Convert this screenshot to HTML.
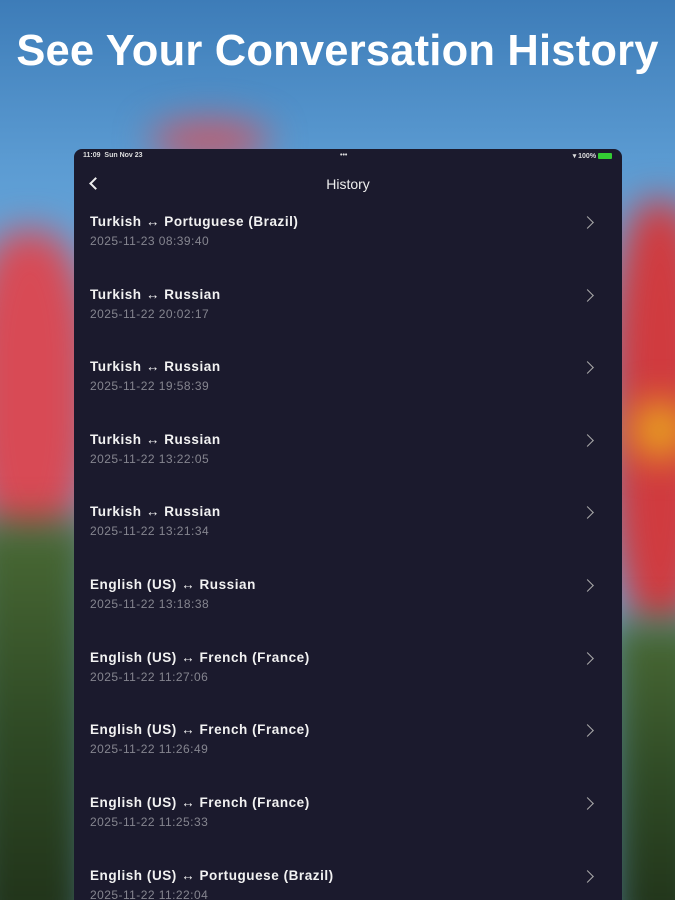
<!DOCTYPE html>
<html><head><meta charset="utf-8"><style>
*{margin:0;padding:0;box-sizing:border-box}
html{width:675px;height:900px;overflow:hidden;background:#5b9bd2}
body{width:675px;height:900px;overflow:hidden;position:relative;font-family:"Liberation Sans",sans-serif;background:linear-gradient(180deg,#3d7cb8 0%,#5b9bd2 18%,#6aa8dc 30%,#6aa8dc 100%)}
.bg{position:absolute;filter:blur(18px)}
h1{position:absolute;top:27px;left:0;width:675px;text-align:center;color:#fff;font-size:43.5px;font-weight:bold;letter-spacing:0.2px}
.panel{position:absolute;left:74px;top:149px;width:548px;height:760px;background:#1b1a2d;border-radius:8px 8px 0 0}
.sb{position:absolute;top:3px;font-size:7px;color:#ddd;font-weight:bold}
.nav{position:absolute;top:27px;width:100%;text-align:center;color:#eee;font-size:14px}
.row{position:absolute;left:16px;right:0;height:72px}
.t{color:#f2f2f2;font-weight:bold;font-size:13.5px;letter-spacing:0.55px}
.d{color:#85858f;font-size:12px;margin-top:5px;letter-spacing:0.45px}
.ch{position:absolute;right:30px;top:4px;width:9px;height:9px;border-right:1.6px solid #aaa;border-top:1.6px solid #aaa;transform:rotate(45deg)}
</style></head><body>
<div class="bg" style="left:150px;top:120px;width:120px;height:40px;background:#c45a6a;border-radius:50%"></div>
<div class="bg" style="left:-30px;top:230px;width:120px;height:320px;background:#d84a55;border-radius:40%"></div>
<div class="bg" style="left:-30px;top:520px;width:120px;height:420px;background:linear-gradient(#4a6a35,#2f4a25,#1f3018)"></div>
<div class="bg" style="left:610px;top:200px;width:100px;height:430px;background:#d03b3f;border-radius:40%"></div>
<div class="bg" style="left:630px;top:400px;width:60px;height:60px;background:#e8a020;border-radius:50%"></div>
<div class="bg" style="left:610px;top:620px;width:100px;height:320px;background:linear-gradient(#4a6a35,#2f4a25,#1f3018)"></div>
<h1>See Your Conversation History</h1>
<div class="panel">
<div class="sb" style="left:9px">11:09 &nbsp;Sun Nov 23</div>
<div class="sb" style="left:266px">•••</div>
<div class="sb" style="right:10px">▾ 100% <span style="display:inline-block;width:14px;height:6px;background:#3c3;border-radius:1px;vertical-align:middle"></span></div>
<div style="position:absolute;left:17px;top:30px;width:9px;height:9px;border-left:2px solid #eee;border-bottom:2px solid #eee;transform:rotate(45deg)"></div>
<div class="nav">History</div>
<div class="row" style="top:65px"><div class="t">Turkish ↔ Portuguese (Brazil)</div><div class="d">2025-11-23 08:39:40</div><div class="ch"></div></div>
<div class="row" style="top:138px"><div class="t">Turkish ↔ Russian</div><div class="d">2025-11-22 20:02:17</div><div class="ch"></div></div>
<div class="row" style="top:210px"><div class="t">Turkish ↔ Russian</div><div class="d">2025-11-22 19:58:39</div><div class="ch"></div></div>
<div class="row" style="top:283px"><div class="t">Turkish ↔ Russian</div><div class="d">2025-11-22 13:22:05</div><div class="ch"></div></div>
<div class="row" style="top:355px"><div class="t">Turkish ↔ Russian</div><div class="d">2025-11-22 13:21:34</div><div class="ch"></div></div>
<div class="row" style="top:428px"><div class="t">English (US) ↔ Russian</div><div class="d">2025-11-22 13:18:38</div><div class="ch"></div></div>
<div class="row" style="top:501px"><div class="t">English (US) ↔ French (France)</div><div class="d">2025-11-22 11:27:06</div><div class="ch"></div></div>
<div class="row" style="top:573px"><div class="t">English (US) ↔ French (France)</div><div class="d">2025-11-22 11:26:49</div><div class="ch"></div></div>
<div class="row" style="top:646px"><div class="t">English (US) ↔ French (France)</div><div class="d">2025-11-22 11:25:33</div><div class="ch"></div></div>
<div class="row" style="top:719px"><div class="t">English (US) ↔ Portuguese (Brazil)</div><div class="d">2025-11-22 11:22:04</div><div class="ch"></div></div>
</div>
</body></html>
